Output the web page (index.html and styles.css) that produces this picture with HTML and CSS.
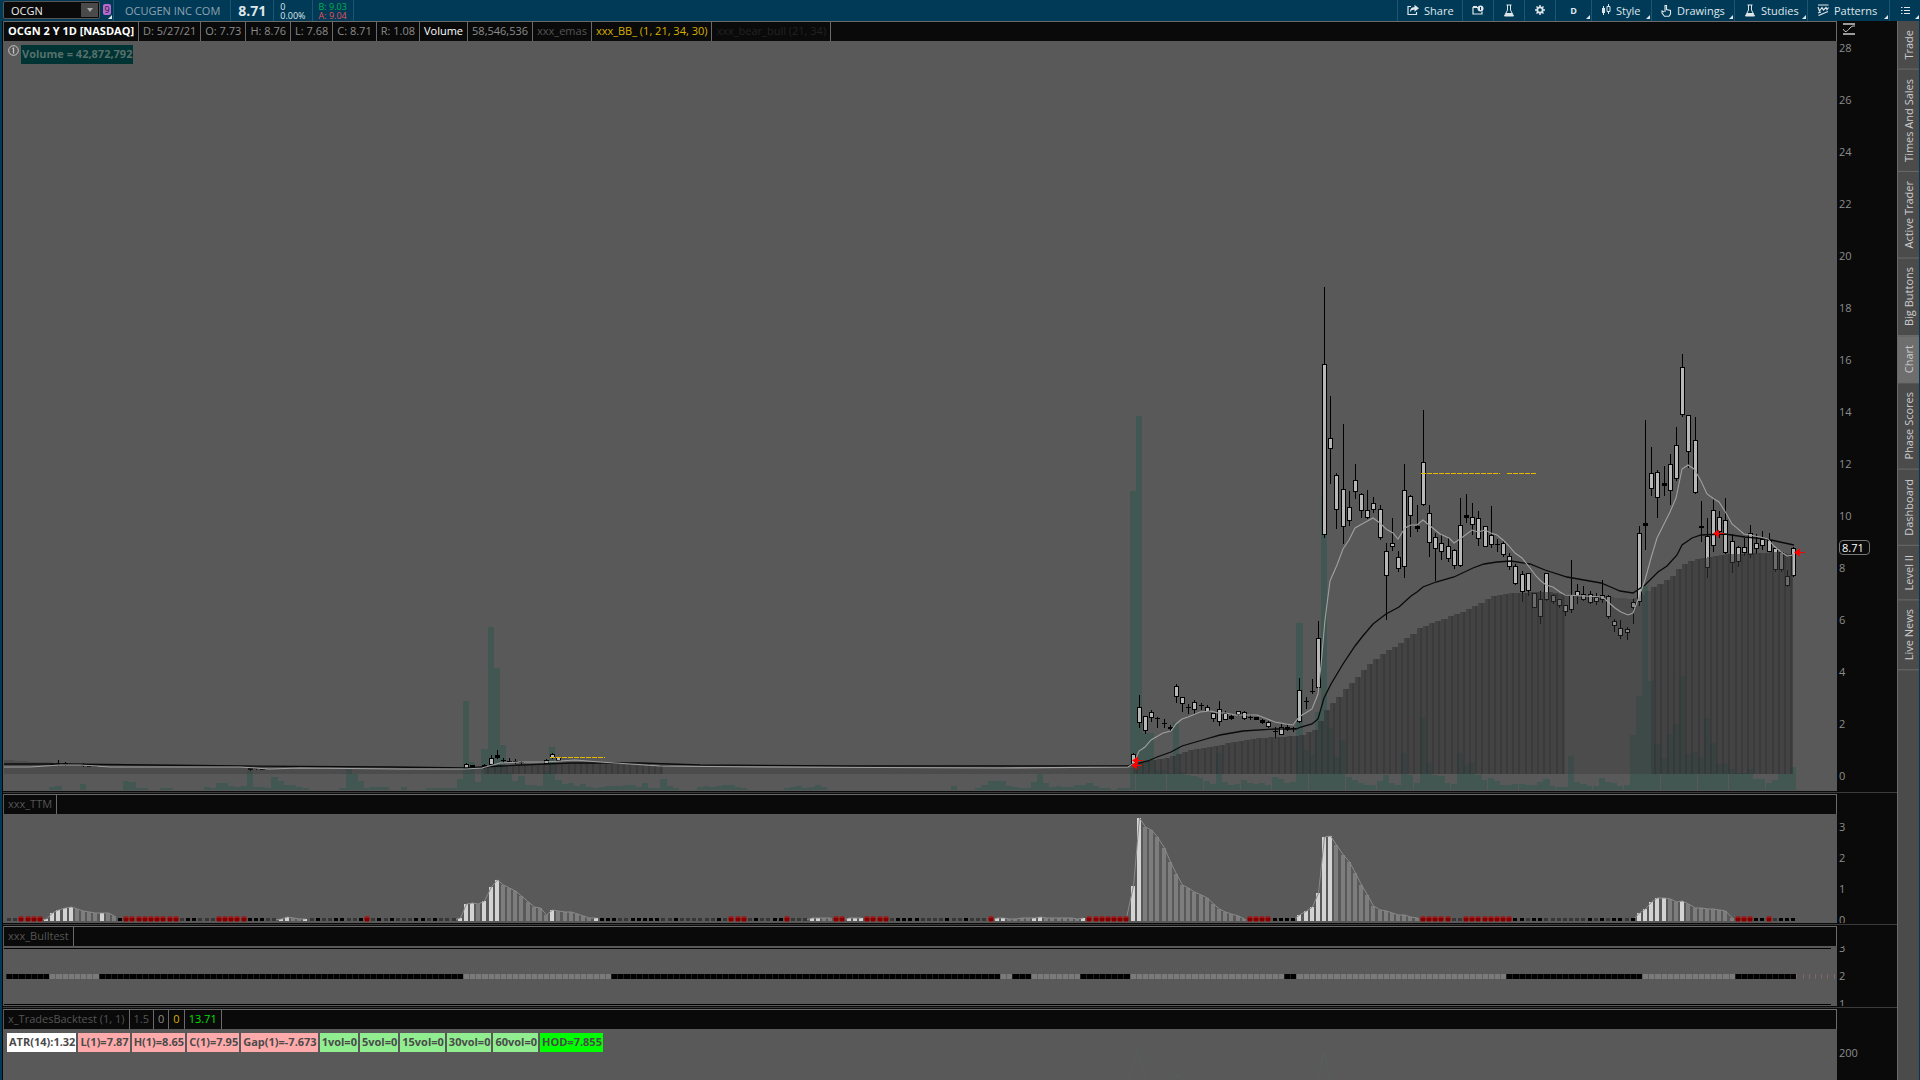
FILE: index.html
```html
<!DOCTYPE html>
<html lang="en">
<head>
    <meta charset="UTF-8">
    <meta name="viewport" content="width=device-width, initial-scale=1.0">
    <title>OCGN - Chart</title>
    <link rel="stylesheet" href="styles.css">
</head>
<body>
    <!-- Top toolbar -->
    <header class="topbar">
        <div class="symbol-box">
            <input class="symbol" type="text" value="OCGN" aria-label="Symbol">
            <button class="symbol-drop" aria-label="Symbol list"><svg width="6" height="4" viewBox="0 0 6 4"><path d="M0 0h6L3 4z" fill="#aaa"/></svg></button>
        </div>
        <button class="link-badge corner" aria-label="Link 9"><span>9</span></button>
        <div class="quote company">OCUGEN INC COM</div>
        <div class="quote last">8.71</div>
        <div class="quote pair change"><span>0</span><span>0.00%</span></div>
        <div class="quote pair bidask"><span class="bid">B: 9.03</span><span class="ask">A: 9.04</span></div>
        <nav class="tools">
            <button class="tool share"><svg width="12" height="12" viewBox="0 0 12 12"><path d="M4 2.500H1v8h8.500V8" fill="none" stroke="#dfe6ea" stroke-width="1.200"/><path d="M7.500 0.800L12 4.300L7.500 7.800V5.700C5 5.500 3.800 6.500 3 8.200C3 4.700 5 3.200 7.500 3z" fill="#dfe6ea"/></svg>Share</button>
            <button class="tool small" aria-label="Detach"><svg width="12" height="12" viewBox="0 0 12 12"><path d="M6 3.500H1v6.500h9V7.500M1 2.500h4" fill="none" stroke="#dfe6ea" stroke-width="1.200"/><circle cx="8.500" cy="4.500" r="3" fill="#dfe6ea"/><path d="M8.500 3v3" stroke="#003a57"/></svg></button>
            <button class="tool small" aria-label="Lab"><svg width="12" height="13" viewBox="0 0 12 13"><path d="M3.500 1h5M4.500 1v5L1.500 12h9L7.500 6V1" fill="none" stroke="#dfe6ea"/><path d="M3 9h6l1.500 3h-9z" fill="#dfe6ea"/></svg></button>
            <button class="tool small" aria-label="Settings"><svg width="12" height="12" viewBox="0 0 12 12"><circle cx="6" cy="6" r="2.700" fill="none" stroke="#dfe6ea" stroke-width="1.800"/><path d="M6 1v2M6 9v2M1 6h2M9 6h2M2.500 2.500l1.300 1.300M8.200 8.200l1.300 1.300M9.500 2.500L8.200 3.800M3.800 8.200L2.500 9.500" stroke="#dfe6ea" stroke-width="1.500"/></svg></button>
            <button class="tool period corner">D</button>
            <button class="tool style corner"><svg width="10" height="12" viewBox="0 0 10 12"><path d="M2.500 2v9M7.500 0v10" stroke="#dfe6ea"/><path d="M1 4h3v5H1z" fill="#dfe6ea"/><path d="M6 2.500h3v5H6z" fill="#003a57" stroke="#dfe6ea"/></svg>Style</button>
            <button class="tool drawings corner"><svg width="11" height="13" viewBox="0 0 11 13"><path d="M4 8V1.500h1.500V5.500L9.500 6.500V10L8 12.300H3.500L1 9V7l2 1" fill="none" stroke="#dfe6ea" stroke-width="1.100"/></svg>Drawings</button>
            <button class="tool studies corner"><svg width="12" height="13" viewBox="0 0 12 13"><path d="M3.500 1h5M4.500 1v5L1.500 12h9L7.500 6V1" fill="none" stroke="#dfe6ea"/><path d="M3 9h6l1.500 3h-9z" fill="#dfe6ea"/></svg>Studies</button>
            <button class="tool patterns corner"><svg width="12" height="12" viewBox="0 0 12 12"><path d="M1 1h10.500M1 3l1.500 4L5 3.500 6.500 6 9 3.500 10 5.500 11.500 3.500M1.500 11.500L11 7.500M1 9l3-1" fill="none" stroke="#dfe6ea" stroke-width="1.200"/></svg>Patterns</button>
            <button class="tool small corner" aria-label="Menu"><svg width="9" height="9" viewBox="0 0 9 9"><path d="M0 1.500h1.500M3 1.500h6M0 4.500h1.500M3 4.500h6M0 7.500h1.500M3 7.500h6" stroke="#dfe6ea"/></svg></button>
        </nav>
    </header>

    <div class="workspace">
        <main class="charts">
            <!-- Price -->
            <section class="panel price">
                <div class="view">
                    <div class="heads">
                        <span class="head title">OCGN 2 Y 1D [NASDAQ]</span>
                        <span class="head">D: 5/27/21</span>
                        <span class="head">O: 7.73</span>
                        <span class="head">H: 8.76</span>
                        <span class="head">L: 7.68</span>
                        <span class="head">C: 8.71</span>
                        <span class="head">R: 1.08</span>
                        <span class="head white">Volume</span>
                        <span class="head">58,546,536</span>
                        <span class="head dim">xxx_emas</span>
                        <span class="head yellow">xxx_BB_ (1, 21, 34, 30)</span>
                        <span class="head hidden-study">xxx_bear_bull (21, 34)</span>
                    </div>
                    <div class="plot">
                        <svg id="price" viewBox="4 41 1833 750" preserveAspectRatio="none"></svg>
                        <div class="volume-note">
                            <svg width="11" height="11" viewBox="0 0 11 11"><circle cx="5.500" cy="5.500" r="4.800" fill="none" stroke="#c8c8c8"/><path d="M5.500 2.500v6M4.500 3.500h1" stroke="#c8c8c8" stroke-width="1.200"/></svg>
                            <span class="volume-label">Volume = 42,872,792</span>
                        </div>
                    </div>
                </div>
                <div class="axis">
                    <div class="axis-head"><svg width="12" height="12" viewBox="0 0 12 12"><path d="M0 1h12M0 11h12" stroke="#ccc" stroke-width="1.600"/><path d="M0 6l2 2.500c2 0.500 3-1.500 5-3.500s2-2 5-2" fill="none" stroke="#ccc"/></svg></div>
                    <div class="scale price-scale">
                        <span>28</span><span>26</span><span>24</span><span>22</span><span>20</span><span>18</span><span>16</span><span>14</span><span>12</span><span>10</span><span>8</span><span>6</span><span>4</span><span>2</span><span>0</span>
                        <b class="price-tag">8.71</b>
                    </div>
                </div>
            </section>

            <!-- TTM -->
            <section class="panel ttm">
                <div class="view">
                    <div class="heads"><span class="head dim">xxx_TTM</span></div>
                    <div class="plot"><svg id="ttm" viewBox="4 814 1833 109" preserveAspectRatio="none"></svg></div>
                </div>
                <div class="axis">
                    <div class="axis-head"></div>
                    <div class="scale ttm-scale"><span>3</span><span>2</span><span>1</span><span>0</span></div>
                </div>
            </section>

            <!-- Bulltest -->
            <section class="panel bulltest">
                <div class="view">
                    <div class="heads"><span class="head dim">xxx_Bulltest</span></div>
                    <div class="plot"><svg id="bulltest" viewBox="4 946 1833 60" preserveAspectRatio="none"></svg></div>
                </div>
                <div class="axis">
                    <div class="axis-head"></div>
                    <div class="scale bull-scale"><span>3</span><span>2</span><span>1</span></div>
                </div>
            </section>

            <!-- Backtest -->
            <section class="panel backtest">
                <div class="view">
                    <div class="heads">
                        <span class="head dim">x_TradesBacktest (1, 1)</span>
                        <span class="head dim">1.5</span>
                        <span class="head">0</span>
                        <span class="head yellow">0</span>
                        <span class="head green">13.71</span>
                    </div>
                    <div class="plot">
                        <svg id="backtest" viewBox="4 1029 1833 51" preserveAspectRatio="none"></svg>
                        <div class="chips">
                            <span class="chip">ATR(14):1.32</span>
                            <span class="chip pink">L(1)=7.87</span>
                            <span class="chip pink">H(1)=8.65</span>
                            <span class="chip pink">C(1)=7.95</span>
                            <span class="chip pink">Gap(1)=-7.673</span>
                            <span class="chip lime">1vol=0</span>
                            <span class="chip lime">5vol=0</span>
                            <span class="chip lime">15vol=0</span>
                            <span class="chip lime">30vol=0</span>
                            <span class="chip lime">60vol=0</span>
                            <span class="chip hod">HOD=7.855</span>
                        </div>
                    </div>
                </div>
                <div class="axis">
                    <div class="axis-head"></div>
                    <div class="scale back-scale"><span>200</span></div>
                </div>
            </section>
        </main>

        <!-- Gadget tabs -->
        <nav class="tabs">
            <button class="tab">Trade</button>
            <button class="tab">Times And Sales</button>
            <button class="tab">Active Trader</button>
            <button class="tab">Big Buttons</button>
            <button class="tab active">Chart</button>
            <button class="tab">Phase Scores</button>
            <button class="tab">Dashboard</button>
            <button class="tab">Level II</button>
            <button class="tab">Live News</button>
        </nav>
    </div>
    <script src="chart.js"></script>
</body>
</html>
```

FILE: styles.css
```css
* {
    box-sizing: border-box;
}
body {
    margin: 0;
    height: 100vh;
    display: flex;
    flex-direction: column;
    overflow: hidden;
    background-color: #003a57;
    font-family: "Open Sans", "Noto Sans", sans-serif;
    font-size: 11px;
    color: #8c8c8c;
}
button {
    font: inherit;
    color: inherit;
    border: none;
    background: none;
    padding: 0;
}
svg {
    display: block;
    flex: none;
}

/* Toolbar */
.topbar {
    display: flex;
    height: 21px;
    flex: none;
    padding-left: 3px;
    color: #dfe6ea;
}
.symbol-box {
    display: flex;
    width: 97px;
    height: 18px;
    margin-top: 1px;
    border: 1px solid #555;
    border-radius: 2px;
    background-color: #0a0a0a;
}
.symbol {
    flex: 1;
    min-width: 0;
    padding: 0 0 0 7px;
    border: none;
    outline: none;
    background: none;
    color: #eee;
    font: inherit;
}
.symbol-drop {
    width: 17px;
    margin: 1px;
    background-color: #4a4a4a;
    display: flex;
    align-items: center;
    justify-content: center;
}
.link-badge {
    width: 14px;
    padding-left: 3px;
    border-right: 1px solid #1d5674;
    display: flex;
    align-items: center;
}
.link-badge span {
    width: 8px;
    height: 11px;
    margin-bottom: 2px;
    border-radius: 2px;
    background-color: #b868d0;
    color: #222;
    font-size: 9px;
    line-height: 11px;
}
.quote {
    display: flex;
    align-items: center;
    padding: 0 10px 0 7px;
    border-right: 1px solid #1d5674;
}
.company {
    padding-left: 11px;
    color: #8fa3b0;
}
.last {
    padding: 0 7px;
    font-size: 14px;
    font-weight: bold;
}
.pair {
    flex-direction: column;
    align-items: flex-start;
    justify-content: center;
    padding: 0 6px;
    font-size: 9px;
    line-height: 9px;
}
.bid {
    color: #00b050;
}
.ask {
    color: #e0505a;
}
.tools {
    display: flex;
    margin-left: auto;
}
.tool {
    display: flex;
    align-items: center;
    gap: 5px;
    border-left: 1px solid #1d5674;
    padding: 0 9px;
    padding-bottom: 1px;
}
.corner {
    position: relative;
}
.corner::after {
    content: "";
    position: absolute;
    right: 1px;
    bottom: 2px;
    border-left: 4px solid transparent;
    border-bottom: 4px solid #dfe6ea;
}
.share { width: 65px; }
.small { width: 31px; justify-content: center; padding: 0 0 1px; }
.period { width: 36px; justify-content: center; font-size: 9px; font-weight: bold; }
.style { width: 60px; }
.drawings { width: 83px; }
.studies { width: 73px; }
.patterns { width: 82px; }

/* Workspace */
.workspace {
    flex: 1;
    min-height: 0;
    display: flex;
    padding: 0 1px 0 2px;
}
.charts {
    flex: 1;
    min-width: 0;
    display: flex;
    flex-direction: column;
    background-color: #0a0a0a;
    padding-left: 1px;
}
.panel {
    display: flex;
}
.panel + .panel {
    border-top: 1px solid #0a0a0a;
    padding-top: 2px;
    background: linear-gradient(#3a3a3a 1px, #0a0a0a 1px);
}
.price { flex: 1; min-height: 0; }
.ttm { height: 132px; }
.bulltest { height: 83px; }
.backtest { height: 74px; }
.view {
    flex: 1;
    min-width: 0;
    display: flex;
    flex-direction: column;
    border-left: 1px solid #595959;
}
.heads {
    display: flex;
    flex: none;
    height: 20px;
    border-top: 1px solid #6a6a6a;
    border-right: 1px solid #6a6a6a;
    background-color: #0a0a0a;
}
.head {
    padding: 0 4px;
    border-right: 1px solid #6a6a6a;
    line-height: 18px;
    white-space: nowrap;
}
.title {
    color: #fff;
    font-weight: bold;
}
.white { color: #fff; }
.dim { color: #555; }
.yellow { color: #d8b000; }
.green { color: #00e000; }
.hidden-study { color: #222; }
.plot {
    flex: 1;
    min-height: 0;
    position: relative;
    background-color: #595959;
}
.plot > svg {
    width: 100%;
    height: 100%;
}
.volume-note {
    position: absolute;
    left: 4px;
    top: 4px;
    display: flex;
    gap: 2px;
}
.volume-label {
    height: 19px;
    padding: 0 1px;
    background-color: #003333;
    color: #56706c;
    font-weight: bold;
    line-height: 18px;
}

/* Scales */
.axis {
    width: 60px;
    display: flex;
    flex-direction: column;
    background-color: #0a0a0a;
}
.axis-head {
    height: 20px;
    flex: none;
    padding: 2px 0 0 6px;
}
.scale {
    flex: 1;
    min-height: 0;
    display: flex;
    flex-direction: column;
    padding-left: 2px;
    line-height: 14px;
    position: relative;
}
.price-scale {
    justify-content: space-between;
    padding-bottom: 8px;
}
.ttm-scale { gap: 17px; padding-top: 6px; overflow: hidden; }
.bull-scale { gap: 14px; justify-content: center; overflow: hidden; }
.back-scale { padding-top: 17px; }
.scale span { flex: none; }
.price-tag {
    position: absolute;
    left: 2px;
    top: 66.5%;
    padding: 0 5px 0 2px;
    border: 1px solid #777;
    border-radius: 4px;
    background-color: #0a0a0a;
    color: #fff;
    font-weight: normal;
    line-height: 13px;
}

/* Colour chips */
.chips {
    position: absolute;
    left: 3px;
    top: 4px;
    display: flex;
    gap: 2px;
}
.chip {
    height: 19px;
    padding: 0 1px 0 2px;
    background-color: #fff;
    color: #4a4a4a;
    font-weight: bold;
    line-height: 18px;
    white-space: nowrap;
}
.pink { background-color: #ffaaaa; }
.lime { background-color: #90ee90; }
.hod { background-color: #00ff00; }

/* Side tabs */
.tabs {
    width: 22px;
    flex: none;
    display: flex;
    flex-direction: column;
    background-color: #4b4b4b;
    border-left: 1px solid #6a6a6a;
}
.tab {
    writing-mode: vertical-rl;
    transform: rotate(180deg);
    padding: 9px 0;
    border-top: 1px solid #6a6a6a;
    color: #ccc;
    line-height: 20px;
}
.active { background-color: #6e6e6e; }

/* Series */
.vol { fill: #425652; }
.wick { stroke: #000; }
.candle { fill: #b8b8b8; stroke: #000; }
.candle-flat { fill: #000; }
.cloud { fill: #333; fill-opacity: 0.35; }
.cloud-strong { fill: #333; fill-opacity: 0.58; }
.cloud-stripe { fill: #222; fill-opacity: 0.25; }
.slow { fill: none; stroke: #0a0a0a; stroke-width: 1.300; }
.fast { fill: none; stroke: #a0a0a0; stroke-width: 1.100; }
.pivot { stroke: #e8b800; stroke-dasharray: 5 1; }
.arrow { fill: #ff0000; }
.week { stroke: #595959; }
.ttm-w { fill: #d3d3d3; }
.ttm-g { fill: #7d7d7d; }
.ttm-dot { fill: #9a1c1c; }
.ttm-r { fill: #800000; }
.ttm-k { fill: #000; }
.ttm-s { fill: #363636; }
.ttm-line { fill: none; stroke: #8a8a8a; }
.bull { fill: #7a7a7a; }
.bear { fill: #000; }
.seam { fill: #444; fill-opacity: 0.45; }
.level { stroke: #000; }
.future { stroke: #80656a; }
.trade { fill: none; stroke: #566059; }
```

FILE: chart.js
```js
const FIRST_X = 9;
const STEP = 6.174;
const BARS = 290;
const barX = k => Math.round(FIRST_X + STEP * k);

function add(svg, name, cls, attrs) {
    const el = document.createElementNS("http://www.w3.org/2000/svg", name);
    el.setAttribute("class", cls);
    for (const key in attrs) el.setAttribute(key, attrs[key]);
    svg.appendChild(el);
}
function rect(svg, cls, x, y, width, height) {
    add(svg, "rect", cls, { x, y, width, height, "shape-rendering": "crispEdges" });
}
function line(svg, cls, x1, y1, x2, y2) {
    add(svg, "line", cls, { x1, y1, x2, y2, "shape-rendering": "crispEdges" });
}
// value of a polyline at x
function at(points, x) {
    for (let i = 1; i < points.length; i++) {
        if (x <= points[i][0]) {
            const [x0, y0] = points[i - 1], [x1, y1] = points[i];
            return Math.round(y0 + (y1 - y0) * (x - x0) / (x1 - x0));
        }
    }
    return points[points.length - 1][1];
}

// ---- volume: first bar, then bar tops ----
const volume = {
    7: [787, 786], 12: [784], 19: [781, 782, 788, 788], 25: [788, 788],
    32: [787, 788, 783, 783, 786, 787, 786, 771, 787, 787, 788, 777, 781, 785, 785, 787, 788],
    54: [788, 769, 774, 781, 788, 787, 787, 787], 64: [787],
    68: [788, 788, 788, 788, 788, 779, 701, 762, 782, 749, 627, 668, 745, 773, 781, 776, 785, 785, 786, 771, 747, 780, 784, 783, 786, 784, 787, 788, 787, 786, 786, 786, 785, 785, 787, 783, 788, 788, 779, 786, 788],
    112: [787, 786, 787, 786, 785, 785, 787, 788], 126: [788, 787, 786, 788, 787, 785, 787],
    153: [786], 157: [788, 785, 781, 781, 781, 786, 787, 788, 788, 782, 774, 783, 787, 786, 787, 787, 785, 785, 783, 786, 788, 788],
    180: [788, 788, 491, 416, 733, 733, 770, 770, 773, 722, 772, 775, 776, 778, 781, 784, 753, 782, 785, 784, 780, 783, 784, 783, 785, 777, 779, 783, 782, 623, 750, 755, 712, 497, 728, 757, 740, 777, 780, 783, 785, 785, 781, 775, 783, 785, 753, 775, 783, 717, 763, 775, 776, 783, 784, 753, 765, 763, 775, 780,
        778, 781, 785, 785, 784, 784, 785, 785, 782, 779, 786, 787, 787, 756, 782, 784, 786, 786, 778, 782, 783, 786, 785, 735, 696, 586, 681, 744, 758, 734, 724, 676, 754, 752, 757, 718, 743, 764, 763, 769, 773, 773, 769, 779, 779, 783, 780, 774, 774, 767]
};

// ---- candles: high, body top, body bottom, low ----
const candles = {
    7: [[763, 764, 765, 765], [760, 763, 763, 765], [762, 763, 764, 765]],
    12: [[763, 765, 765, 766], [766, 766, 766, 766], [766, 766, 766, 766]],
    39: [[768, 768, 769, 770], [768, 768, 768, 769], [769, 769, 769, 769]],
    74: [[763, 764, 768, 769], [765, 765, 767, 767]],
    77: [[764, 765, 767, 768], [755, 758, 764, 765], [750, 755, 757, 758], [758, 760, 760, 762], [758, 761, 761, 762], [759, 761, 761, 763], [761, 762, 762, 764]],
    87: [[759, 760, 763, 763], [753, 754, 757, 758], [757, 757, 760, 760]],
    182: [[753, 754, 763, 764], [695, 707, 722, 727], [716, 716, 730, 733], [710, 712, 717, 721], [717, 718, 718, 727], [719, 723, 723, 727], [725, 727, 728, 730], [684, 686, 696, 702],
        [697, 697, 703, 711], [704, 707, 707, 713], [700, 702, 709, 713], [703, 705, 705, 709], [705, 707, 711, 711], [713, 713, 718, 721], [701, 709, 721, 725], [711, 713, 719, 719],
        [714, 716, 718, 719], [711, 711, 714, 715], [711, 712, 718, 719], [715, 717, 717, 719], [717, 717, 719, 719], [719, 720, 722, 723], [721, 722, 726, 727], [727, 731, 731, 738],
        [724, 727, 734, 734], [725, 727, 729, 730], [727, 728, 728, 731], [678, 690, 721, 722], [697, 701, 701, 708], [679, 691, 691, 693], [621, 638, 687, 688], [287, 364, 534, 537],
        [396, 438, 448, 483], [473, 475, 509, 528], [424, 489, 526, 543], [491, 507, 520, 525], [464, 480, 491, 498], [493, 494, 510, 517], [490, 510, 517, 518], [497, 503, 509, 512],
        [505, 509, 537, 539], [543, 551, 575, 619], [518, 543, 546, 550], [551, 557, 568, 571], [464, 490, 566, 577], [495, 496, 515, 536], [505, 526, 528, 531], [410, 462, 504, 505],
        [505, 513, 542, 556], [533, 537, 548, 580], [535, 543, 551, 559], [538, 546, 558, 561], [549, 550, 565, 568], [498, 525, 565, 566], [494, 515, 517, 522], [503, 517, 524, 534],
        [511, 518, 538, 545], [526, 526, 546, 546], [506, 535, 544, 547], [539, 544, 544, 551], [541, 543, 554, 556], [553, 556, 566, 569], [564, 566, 583, 584], [571, 574, 591, 601],
        [573, 573, 590, 595], [593, 593, 607, 607], [591, 599, 616, 623], [573, 573, 599, 600], [594, 595, 601, 603], [599, 599, 605, 607], [605, 605, 611, 615], [560, 595, 609, 612],
        [584, 591, 595, 603], [586, 594, 599, 600], [591, 594, 602, 603], [593, 597, 601, 604], [580, 595, 599, 602], [595, 596, 616, 618], [619, 621, 625, 631], [620, 628, 635, 638],
        [627, 629, 632, 639], [599, 602, 607, 623], [526, 533, 601, 605], [420, 523, 525, 549], [447, 473, 488, 495], [470, 472, 497, 517], [466, 483, 485, 495], [454, 464, 490, 504],
        [427, 445, 478, 480], [354, 367, 414, 416], [415, 415, 451, 467], [417, 440, 492, 493], [501, 526, 527, 541], [518, 536, 567, 577], [499, 510, 545, 551], [511, 517, 531, 537],
        [498, 520, 552, 553], [534, 541, 562, 572], [546, 547, 561, 566], [538, 547, 552, 555], [525, 533, 554, 557], [534, 543, 548, 553], [531, 539, 545, 549], [533, 540, 551, 551],
        [547, 548, 569, 571], [551, 552, 569, 571], [570, 576, 585, 586], [547, 548, 575, 576]]
};

const slow = [[4, 764], [60, 764], [150, 765], [240, 766], [390, 767], [466, 768], [500, 766], [570, 763], [640, 763], [700, 765], [850, 766], [1127, 766], [1148, 761], [1157, 757], [1171, 752], [1182, 746], [1206, 739], [1220, 735], [1243, 731], [1275, 729], [1296, 729], [1301, 727], [1312, 724], [1318, 719], [1324, 698], [1331, 684], [1343, 664], [1355, 646], [1362, 637], [1373, 624], [1386, 614], [1399, 607], [1411, 596], [1417, 592], [1423, 587], [1436, 582], [1454, 577], [1473, 568], [1484, 564], [1497, 562], [1511, 561], [1530, 564], [1545, 570], [1567, 577], [1601, 583], [1613, 588], [1620, 591], [1633, 593], [1645, 585], [1658, 572], [1667, 566], [1677, 555], [1682, 545], [1692, 538], [1701, 535], [1725, 534], [1745, 537], [1767, 539], [1780, 542], [1794, 545]];
const fast = [[4, 767], [30, 767], [60, 765], [80, 765], [110, 767], [240, 767], [270, 769], [300, 768], [400, 769], [466, 769], [482, 768], [500, 763], [520, 762], [545, 762], [575, 760], [600, 762], [660, 766], [760, 767], [1000, 768], [1128, 767], [1134, 763], [1139, 751], [1145, 747], [1151, 740], [1163, 733], [1171, 731], [1176, 724], [1182, 719], [1188, 717], [1200, 712], [1211, 711], [1218, 713], [1226, 713], [1235, 715], [1257, 715], [1265, 718], [1275, 722], [1286, 724], [1293, 725], [1299, 717], [1312, 709], [1318, 694], [1321, 665], [1325, 620], [1330, 581], [1337, 565], [1343, 549], [1349, 540], [1355, 528], [1362, 524], [1373, 518], [1380, 523], [1386, 529], [1393, 533], [1398, 539], [1405, 528], [1411, 525], [1417, 525], [1423, 520], [1429, 525], [1440, 534], [1449, 538], [1454, 543], [1460, 539], [1472, 530], [1478, 532], [1485, 530], [1491, 533], [1497, 535], [1503, 540], [1508, 545], [1515, 553], [1522, 558], [1530, 568], [1536, 576], [1541, 581], [1546, 585], [1553, 587], [1560, 592], [1565, 595], [1603, 597], [1607, 601], [1615, 608], [1621, 612], [1628, 615], [1633, 613], [1639, 597], [1645, 580], [1651, 558], [1657, 538], [1670, 512], [1676, 498], [1682, 469], [1688, 465], [1694, 469], [1701, 481], [1707, 494], [1714, 499], [1719, 502], [1726, 513], [1732, 524], [1744, 534], [1760, 537], [1768, 539], [1774, 546], [1780, 551], [1787, 556], [1794, 555]];
const cloud = [[4, 760], [40, 762], [100, 764], [190, 766], [370, 768], [470, 769], [500, 765], [570, 763], [640, 764], [700, 767], [1130, 768], [1148, 761], [1170, 757], [1192, 750], [1220, 745], [1245, 740], [1270, 737], [1300, 736], [1317, 729], [1326, 711], [1345, 690], [1374, 660], [1399, 644], [1422, 627], [1460, 613], [1497, 595], [1510, 593], [1548, 592], [1565, 594], [1600, 596], [1633, 599], [1645, 593], [1658, 585], [1675, 575], [1682, 565], [1692, 560], [1720, 555], [1750, 553], [1780, 552], [1793, 554]];

function drawPrice() {
    const svg = document.getElementById("price");
    for (const start in volume) {
        volume[start].forEach((top, i) => {
            const k = Number(start) + i;
            rect(svg, "vol", barX(k) - 3, top, barX(k + 1) - barX(k), 790 - top);
        });
    }
    [1135, 1166, 1203, 1240, 1271, 1308, 1345, 1376, 1413, 1450, 1487, 1518, 1555, 1592, 1623, 1660, 1697, 1728, 1765].forEach(x => line(svg, "week", x + 0.5, 774, x + 0.5, 790));
    for (const start in candles) {
        candles[start].forEach(([high, top, bottom, low], i) => {
            const x = barX(Number(start) + i);
            line(svg, "wick", x + 0.5, high, x + 0.5, low + 1);
            if (bottom - top < 3) rect(svg, "candle-flat", x - 2, top, 5, bottom - top + 1);
            else rect(svg, "candle", x - 1.5, top + 0.5, 4, bottom - top);
        });
    }
    for (let k = 0; k < BARS - 1; k++) {
        const x = k ? barX(k) : 4, w = barX(k + 1) - x;
        const top = at(cloud, x + 3);
        const strong = (k >= 77 && k <= 105) || (k >= 182 && k <= 251) || k >= 266;
        rect(svg, strong ? "cloud-strong" : "cloud", x, top, w, 774 - top);
        if (strong) rect(svg, "cloud-stripe", x + 3, top, 2, 774 - top);
    }
    add(svg, "polyline", "slow", { points: slow.join(" ") });
    add(svg, "polyline", "fast", { points: fast.join(" ") });
    line(svg, "pivot", 550, 757.5, 605, 757.5);
    line(svg, "pivot", 1421, 473.5, 1500, 473.5);
    line(svg, "pivot", 1507, 473.5, 1537, 473.5);
    [[1132, 760], [1131, 765], [1713, 533], [1794, 552]].forEach(([x, y]) =>
        add(svg, "path", "arrow", { d: `M${x} ${y + 0.5}l6 -4v3.500h5v1h-5v3.500z` }));
}

// ---- TTM: first bar, then shade and bar tops; the other bars are dots ----
const ttmBars = {
    6: ["w", 919, 913, 910, 908, 907], 11: ["g", 909, 911, 912, 913], 15: ["w", 913], 16: ["g", 913, 916],
    44: ["w", 919, 917], 46: ["g", 918, 919], 48: ["w", 919],
    73: ["w", 918, 904, 903], 76: ["g", 904], 77: ["w", 901, 887, 880],
    80: ["g", 885, 888, 891, 896, 902, 907, 908, 915], 88: ["w", 910], 89: ["g", 911, 912, 912, 914, 916, 918], 95: ["w", 918],
    130: ["w", 918, 918], 132: ["g", 918, 918], 136: ["w", 918, 918, 918],
    160: ["w", 918, 918], 162: ["g", 919, 919, 918, 918], 166: ["w", 918, 917], 168: ["g", 918, 918, 918, 918, 918, 919], 174: ["w", 918],
    182: ["w", 886, 818], 184: ["g", 827, 830, 837, 848, 862, 874, 885, 888, 892, 895, 898, 904, 909, 912, 914, 916, 919],
    209: ["w", 915, 911, 907, 893, 837, 836], 215: ["g", 845, 855, 862, 873, 885, 895, 906, 910, 911, 913, 915, 915, 917, 918],
    264: ["w", 913, 909, 902, 898, 898], 269: ["g", 899, 902], 271: ["w", 901], 272: ["g", 904, 908, 908, 909, 909, 910, 911, 918]
};
const ttmRed = [[2, 5], [19, 27], [34, 38], [58, 58], [117, 119], [126, 126], [134, 135], [139, 142], [159, 159], [175, 181], [201, 204], [229, 233], [236, 243], [280, 282], [285, 285]];
const ttmBlack = [18, 29, 30, 39, 40, 41, 50, 53, 54, 57, 60, 62, 66, 67, 69, 96, 97, 98, 101, 102, 103, 104, 105, 108, 115, 121, 124, 125, 144, 145, 146, 147, 152, 155, 205, 206, 207, 208, 244, 245, 247, 248, 256, 258, 260, 261, 263, 283, 284, 287, 288, 289];

function drawTtm() {
    const svg = document.getElementById("ttm");
    const used = new Set();
    let run = [];
    const flush = () => {
        if (run.length > 1) add(svg, "polyline", "ttm-line", { points: run.join(" ") });
        run = [];
    };
    for (const start in ttmBars) {
        const [kind, ...tops] = ttmBars[start];
        if (!used.has(start - 1)) flush();
        if (!run.length) run.push([barX(start - 1), 920]);
        tops.forEach((top, i) => {
            const k = Number(start) + i;
            used.add(k);
            run.push([barX(k) + 0.5, top]);
            rect(svg, "ttm-" + kind, barX(k) - 2, top, 4, 921 - top);
        });
    }
    flush();
    for (const [from, to] of ttmRed) {
        for (let k = from; k <= to; k++) {
            used.add(k);
            add(svg, "circle", "ttm-dot", { cx: barX(k), cy: 919, r: 3 });
            rect(svg, "ttm-r", barX(k) - 2, 918, 4, 3);
        }
    }
    for (let k = 0; k < BARS; k++) {
        if (!used.has(k)) rect(svg, ttmBlack.includes(k) ? "ttm-k" : "ttm-s", barX(k) - 2, 918, 4, 3);
    }
}

function drawBulltest() {
    const svg = document.getElementById("bulltest");
    const bull = [[7, 14], [74, 97], [161, 162], [166, 173], [182, 206], [209, 242], [265, 279]];
    line(svg, "level", 4, 948.5, 1831, 948.5);
    line(svg, "level", 4, 1004.5, 1831, 1004.5);
    for (let k = 0; k < BARS; k++) {
        const isBull = bull.some(([from, to]) => k >= from && k <= to);
        rect(svg, isBull ? "bull" : "bear", barX(k) - 3, 974, barX(k + 1) - barX(k), 5);
        rect(svg, "seam", barX(k) - 3, 974, 1, 5);
    }
    for (let k = BARS; barX(k) < 1840; k++) line(svg, "future", barX(k) - 2.5, 974, barX(k) - 2.5, 979);
}

function drawBacktest() {
    const svg = document.getElementById("backtest");
    add(svg, "polyline", "trade", { points: "1128,1079 1138,1050 1145,1079" });
    add(svg, "polyline", "trade", { points: "1317,1079 1324,1052 1330,1079" });
    add(svg, "polyline", "trade", { points: "1175,1079 1178,1074 1181,1079" });
}

drawPrice();
drawTtm();
drawBulltest();
drawBacktest();
```
